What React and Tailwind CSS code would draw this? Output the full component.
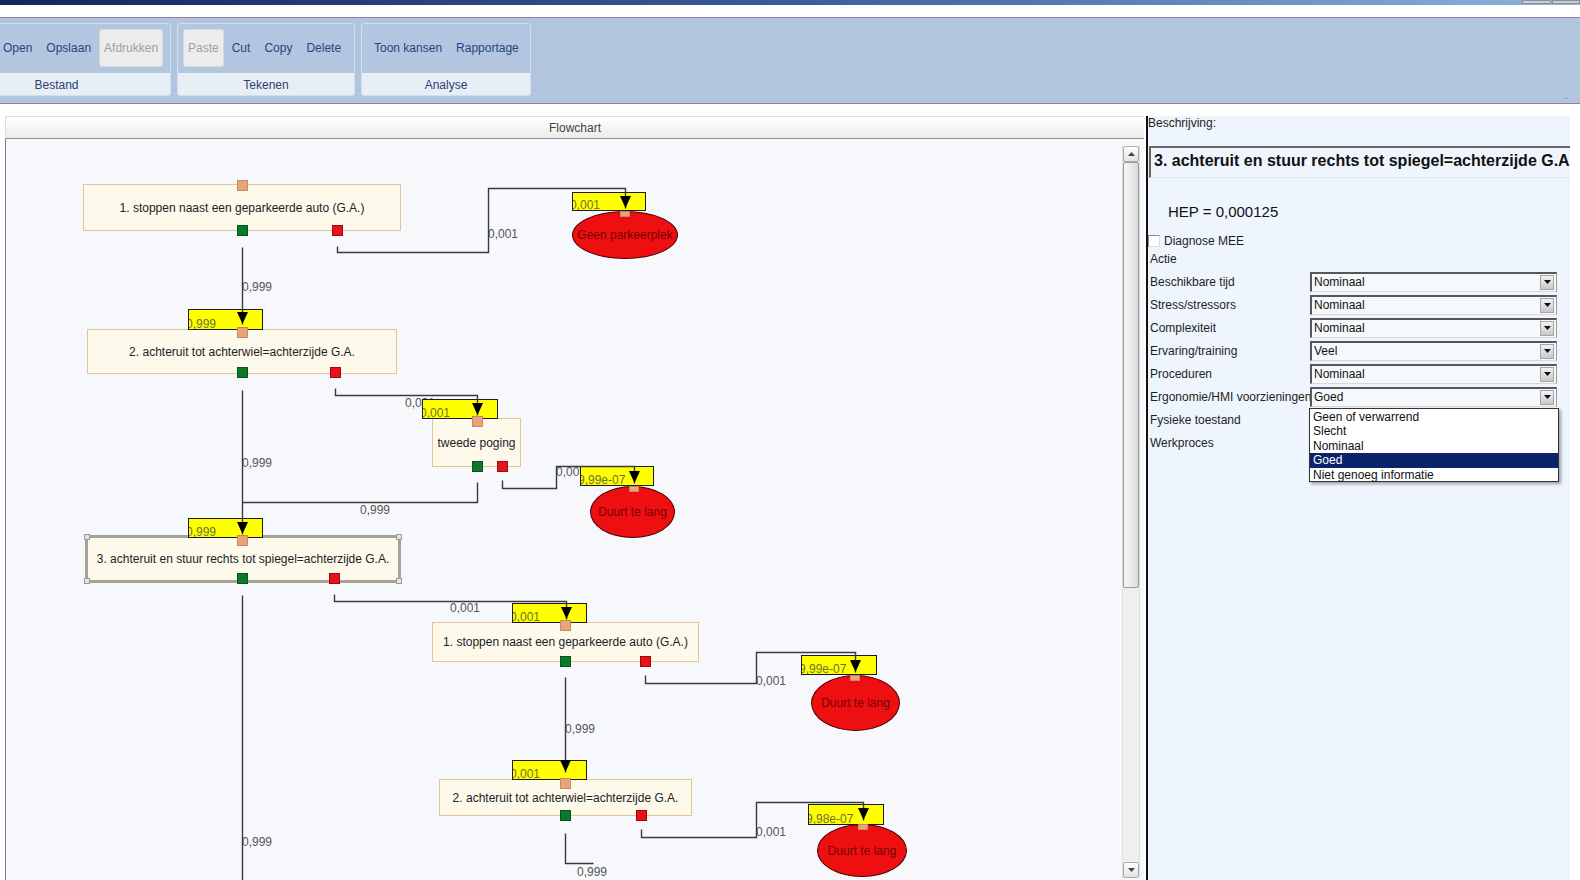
import React from "react";

const K = 1580 / 1568;
const KY = 880 / 873;
const OX = 6;
const OY = 139;
const X = (x) => Math.round(x * K) - OX;
const Y = (y) => Math.round(y * KY) - OY;

const nodes = [
  { x1: 82, y1: 183, x2: 398, y2: 229, text: "1. stoppen naast een geparkeerde auto (G.A.)" },
  { x1: 86, y1: 326, x2: 394, y2: 371, text: "2. achteruit tot achterwiel=achterzijde G.A." },
  { x1: 429, y1: 415, x2: 517, y2: 463, text: "tweede poging" },
  { x1: 84, y1: 531, x2: 398, y2: 578, text: "3. achteruit en stuur rechts tot spiegel=achterzijde G.A.", sel: true },
  { x1: 429, y1: 617, x2: 694, y2: 657, text: "1. stoppen naast een geparkeerde auto (G.A.)" },
  { x1: 436, y1: 773, x2: 687, y2: 810, text: "2. achteruit tot achterwiel=achterzijde G.A." },
];

const terminals = [
  { x1: 568, y1: 209, x2: 673, y2: 257, text: "Geen parkeerplek" },
  { x1: 586, y1: 482, x2: 670, y2: 534, text: "Duurt te lang" },
  { x1: 805, y1: 670, x2: 893, y2: 725, text: "Duurt te lang" },
  { x1: 811, y1: 817, x2: 900, y2: 870, text: "Duurt te lang" },
];

const ports = [
  [240, 184, "o"], [240, 228, "g"], [334, 228, "r"],
  [240, 329, "o"], [240, 369, "g"], [332, 369, "r"],
  [473, 418, "o"], [473, 462, "g"], [498, 462, "r"],
  [240, 536, "o"], [240, 573, "g"], [331, 573, "r"],
  [561, 620, "o"], [561, 656, "g"], [640, 656, "r"],
  [561, 777, "o"], [561, 809, "g"], [636, 809, "r"],
];

const tports = [[620, 212], [629, 485], [849, 673], [856, 820]];

const yboxes = [
  { x1: 568, y1: 190, x2: 641, y2: 209, t: "0,001" },
  { x1: 187, y1: 307, x2: 261, y2: 327, t: "0,999" },
  { x1: 419, y1: 396, x2: 494, y2: 416, t: "0,001" },
  { x1: 576, y1: 462, x2: 649, y2: 482, t: "9,99e-07" },
  { x1: 187, y1: 514, x2: 261, y2: 534, t: "0,999" },
  { x1: 508, y1: 598, x2: 583, y2: 618, t: "0,001" },
  { x1: 795, y1: 650, x2: 870, y2: 670, t: "9,99e-07" },
  { x1: 508, y1: 754, x2: 583, y2: 774, t: "0,001" },
  { x1: 802, y1: 798, x2: 877, y2: 818, t: "9,98e-07" },
];

const edges = [
  { pts: [[334, 244], [334, 250], [484, 250], [484, 187], [620, 187], [620, 206]], arrow: true },
  { pts: [[240, 245], [240, 321]], arrow: true },
  { pts: [[332, 385], [332, 392], [473, 392], [473, 412]], arrow: true },
  { pts: [[498, 476], [498, 484], [552, 484], [552, 462], [629, 462], [629, 479]], arrow: true },
  { pts: [[473, 478], [473, 498], [240, 498]] },
  { pts: [[240, 387], [240, 530]], arrow: true },
  { pts: [[331, 589], [331, 596], [562, 596], [562, 614]], arrow: true },
  { pts: [[640, 670], [640, 678], [750, 678], [750, 647], [849, 647], [849, 667]], arrow: true },
  { pts: [[561, 672], [561, 766]], arrow: true },
  { pts: [[636, 822], [636, 830], [750, 830], [750, 796], [856, 796], [856, 813]], arrow: true },
  { pts: [[561, 826], [561, 856], [588, 856]] },
  { pts: [[240, 590], [240, 900]] },
];

const labels = [
  { x: 484, y: 232, t: "0,001" },
  { x: 240, y: 285, t: "0,999" },
  { x: 402, y: 400, t: "0,001" },
  { x: 552, y: 468, t: "0,001" },
  { x: 357, y: 506, t: "0,999" },
  { x: 240, y: 459, t: "0,999" },
  { x: 447, y: 603, t: "0,001" },
  { x: 750, y: 676, t: "0,001" },
  { x: 561, y: 723, t: "0,999" },
  { x: 750, y: 825, t: "0,001" },
  { x: 573, y: 865, t: "0,999" },
  { x: 240, y: 835, t: "0,999" },
];

const portColor = {
  o: "bg-[#e9a57a] border-[#c98a62]",
  g: "bg-[#0b7a2b] border-[#08521d]",
  r: "bg-[#e8121a] border-[#a0080e]",
};

function Btn({ children, disabled }) {
  return disabled ? (
    <div className="h-[38px] px-[4px] flex items-center rounded-[3px] bg-[#ececec] border border-[#d9d9d9] text-[#a0a0a0]">
      {children}
    </div>
  ) : (
    <div className="h-[38px] px-[6px] flex items-center text-[#24467e]">{children}</div>
  );
}

function Group({ cls, pad, label, children }) {
  return (
    <div className={"shrink-0 h-[73px] flex flex-col rounded-[3px] border border-[#d3ddeb] bg-[#b3c6df] overflow-hidden " + cls}>
      <div className={"h-[49px] flex items-start pt-[5px] gap-[2px] " + pad}>{children}</div>
      <div className="flex-1 bg-[#e8eef6] flex items-center justify-center text-[#2a4470] pt-[1px]">{label}</div>
    </div>
  );
}

function Select({ value }) {
  return (
    <div className="w-[247px] h-[20px] relative bg-[#f6f9fc] border-t-2 border-l-2 border-[#585858] border-r border-b border-r-[#9a9a9a] border-b-[#d8d8d8] flex items-center pl-[2px] text-[#111]">
      {value}
      <div className="absolute right-[2px] top-[1px] w-[14px] h-[15px] bg-gradient-to-b from-[#f2f2f2] to-[#c9c9c9] border border-[#a5a5a5] flex items-center justify-center">
        <svg width="7" height="4" viewBox="0 0 7 4"><path d="M0 0H7L3.5 4Z" fill="#111" /></svg>
      </div>
    </div>
  );
}

function Flowchart() {
  return (
    <div className="relative flex-1 h-full overflow-hidden border-l border-[#7a7a7a] bg-[#f7f8fc]">
      {nodes.map((n, i) => (
        <div
          key={"n" + i}
          className={
            "absolute flex items-center justify-center text-[#222] whitespace-nowrap bg-[#fdfaec] " +
            (n.sel ? "border-[3px] border-[#a5a29a]" : "border border-[#e2c596]")
          }
          style={{ left: X(n.x1), top: Y(n.y1), width: X(n.x2) - X(n.x1), height: Y(n.y2) - Y(n.y1) }}
        >
          <span>{n.text}</span>
          {n.sel && (
            <>
              <div className="absolute -left-[4px] -top-[4px] w-[6px] h-[6px] bg-[#e4e4e4] border border-[#9a9a9a]" />
              <div className="absolute -right-[4px] -top-[4px] w-[6px] h-[6px] bg-[#e4e4e4] border border-[#9a9a9a]" />
              <div className="absolute -left-[4px] -bottom-[4px] w-[6px] h-[6px] bg-[#e4e4e4] border border-[#9a9a9a]" />
              <div className="absolute -right-[4px] -bottom-[4px] w-[6px] h-[6px] bg-[#e4e4e4] border border-[#9a9a9a]" />
            </>
          )}
        </div>
      ))}
      {terminals.map((t, i) => (
        <div
          key={"t" + i}
          className="absolute rounded-[50%] bg-[#ee1010] border border-[#4a0000] flex items-center justify-center text-[#7a0000] whitespace-nowrap"
          style={{ left: X(t.x1), top: Y(t.y1), width: X(t.x2) - X(t.x1), height: Y(t.y2) - Y(t.y1) }}
        >
          {t.text}
        </div>
      ))}
      {labels.map((l, i) => (
        <div
          key={"l" + i}
          className="absolute leading-[14px] text-[#555] whitespace-nowrap"
          style={{ left: X(l.x), top: Y(l.y) - 7 }}
        >
          {l.t}
        </div>
      ))}
      {yboxes.map((b, i) => (
        <div
          key={"y" + i}
          className="absolute bg-[#ffff00] border border-[#1c1c1c] overflow-hidden flex items-end"
          style={{ left: X(b.x1), top: Y(b.y1), width: X(b.x2) - X(b.x1), height: Y(b.y2) - Y(b.y1) }}
        >
          <span className="-ml-[3px] -mb-[2px] leading-[13px] text-[#6f6f3a]">{b.t}</span>
        </div>
      ))}
      <svg className="absolute left-0 top-0" width="1120" height="745">
        {edges.map((e, i) => {
          const pts = e.pts.map(([x, y]) => X(x) + 0.5 + "," + (Y(y) + 0.5)).join(" ");
          const last = e.pts[e.pts.length - 1];
          const tx = X(last[0]) + 0.5;
          const ty = Y(last[1]);
          return (
            <g key={"e" + i}>
              <polyline points={pts} fill="none" stroke="#3a3a3a" strokeWidth="1.4" />
              {e.arrow && <path d={`M${tx - 5.5} ${ty - 12}L${tx + 5.5} ${ty - 12}L${tx} ${ty}Z`} fill="#000" />}
            </g>
          );
        })}
      </svg>
      {ports.map(([cx, cy, c], i) => (
        <div
          key={"p" + i}
          className={"absolute w-[11px] h-[11px] border " + portColor[c]}
          style={{ left: X(cx) - 5, top: Y(cy) - 5 }}
        />
      ))}
      {tports.map(([cx, cy], i) => (
        <div
          key={"tp" + i}
          className="absolute w-[10px] h-[6px] bg-[#e9a57a] border border-[#c98a62]"
          style={{ left: X(cx) - 5, top: Y(cy) - 3 }}
        />
      ))}
    </div>
  );
}

export default function App() {
  const rows = [
    ["Beschikbare tijd", "Nominaal"],
    ["Stress/stressors", "Nominaal"],
    ["Complexiteit", "Nominaal"],
    ["Ervaring/training", "Veel"],
    ["Proceduren", "Nominaal"],
    ["Ergonomie/HMI voorzieningen", "Goed"],
    ["Fysieke toestand", "Nominaal"],
    ["Werkproces", "Nominaal"],
  ];
  return (
    <div className="w-[1580px] h-[880px] overflow-hidden bg-white flex flex-col font-['Liberation_Sans',Arial,sans-serif] text-[12px]">
      {/* window title bar */}
      <div className="h-[5px] shrink-0 bg-gradient-to-r from-[#14265c] via-[#3d5b9a] to-[#93b3dd] flex justify-end">
        <div className="w-[58px] h-[4px] flex gap-[1px]">
          <div className="flex-1 bg-[#c8ccd4] border border-[#8a8f99]" />
          <div className="flex-1 bg-[#c8ccd4] border border-[#8a8f99]" />
        </div>
      </div>
      <div className="h-[12px] shrink-0 bg-white" />
      {/* ribbon */}
      <div className="h-[87px] shrink-0 bg-[#b1c5df] border-y border-[#9a78a8] flex gap-[6px] pt-[5px] relative">
        <Group cls="w-[229px] -ml-[58px]" pad="pl-[54px]" label="Bestand">
          <Btn>Open</Btn>
          <Btn>Opslaan</Btn>
          <Btn disabled>Afdrukken</Btn>
        </Group>
        <Group cls="w-[178px]" pad="pl-[5px]" label="Tekenen">
          <Btn disabled>Paste</Btn>
          <Btn>Cut</Btn>
          <Btn>Copy</Btn>
          <Btn>Delete</Btn>
        </Group>
        <Group cls="w-[170px]" pad="pl-[6px]" label="Analyse">
          <Btn>Toon kansen</Btn>
          <Btn>Rapportage</Btn>
        </Group>
        <div className="absolute right-[10px] bottom-[2px] text-[8px] leading-[8px] text-[#8a9ab8]">⌄</div>
      </div>
      <div className="h-[12px] shrink-0 bg-white" />
      {/* main */}
      <div className="flex-1 flex min-h-0">
        <div className="ml-[5px] w-[1139px] flex flex-col">
          <div className="h-[23px] shrink-0 bg-gradient-to-b from-white to-[#ebebeb] border-t border-l border-[#dcdcdc] border-b border-b-[#8a8a8a] flex items-center justify-center text-[#444]">
            Flowchart
          </div>
          <div className="flex-1 flex min-h-0 bg-[#f7f8fc]">
            <Flowchart />
            <div className="w-[18px] mt-[7px] mb-[2px] mr-[4px] flex flex-col bg-[#efefef] border-x border-[#dedede]">
              <div className="h-[16px] shrink-0 bg-gradient-to-b from-white to-[#e2e2e2] border border-[#ababab] rounded-[2px] flex items-center justify-center">
                <svg width="7" height="4" viewBox="0 0 7 4"><path d="M0 4H7L3.5 0Z" fill="#444" /></svg>
              </div>
              <div className="h-[426px] shrink-0 rounded-[2px] border border-[#9c9c9c] bg-gradient-to-r from-[#f6f6f6] via-[#ececec] to-[#d8d8d8]" />
              <div className="flex-1" />
              <div className="h-[16px] shrink-0 bg-gradient-to-b from-white to-[#e2e2e2] border border-[#ababab] rounded-[2px] flex items-center justify-center">
                <svg width="7" height="4" viewBox="0 0 7 4"><path d="M0 0H7L3.5 4Z" fill="#444" /></svg>
              </div>
            </div>
          </div>
        </div>
        {/* right panel */}
        <div className="ml-[2px] border-l-2 border-[#111] w-[424px] flex flex-col">
          <div className="relative w-[422px] flex-1 bg-[#eef5fc] text-[#1e1e1e]">
            <div className="h-[14px] leading-[14px]">Beschrijving:</div>
            <div className="mt-[16px] ml-[1px] h-[32px] border-t-2 border-l-2 border-[#666] border-b border-b-[#dfe6ee] flex items-center pl-[3px] overflow-hidden whitespace-nowrap">
              <span className="text-[16px] font-bold text-[#111] -mt-[4px]">
                3. achteruit en stuur rechts tot spiegel=achterzijde G.A.
              </span>
            </div>
            <div className="mt-[22px] h-[24px] flex items-center pl-[20px] text-[15px] text-[#111]">HEP = 0,000125</div>
            <div className="mt-[9px] h-[16px] flex items-center">
              <div className="w-[12px] h-[12px] bg-white border-t border-l border-[#8a8a8a] border-r border-b border-r-[#dcdcdc] border-b-[#dcdcdc]" />
              <span className="ml-[4px]">Diagnose MEE</span>
            </div>
            <div className="mt-[2px] h-[16px] flex items-center pl-[2px]">Actie</div>
            <div className="mt-[3px] flex flex-col">
              {rows.map(([l, v]) => (
                <div key={l} className="h-[23px] flex items-center">
                  <div className="w-[162px] pl-[2px] whitespace-nowrap">{l}</div>
                  <Select value={v} />
                </div>
              ))}
            </div>
            <div className="absolute left-[161px] top-[292px] w-[250px] h-[74px] bg-white border border-[#333] shadow-[2px_2px_3px_rgba(0,0,0,0.35)] pt-[1px] text-[#111]">
              {["Geen of verwarrend", "Slecht", "Nominaal", "Goed", "Niet genoeg informatie"].map((t) => (
                <div
                  key={t}
                  className={"h-[14.4px] leading-[14.4px] pl-[3px] " + (t === "Goed" ? "bg-[#0a246a] text-white" : "")}
                >
                  {t}
                </div>
              ))}
            </div>
          </div>
        </div>
      </div>
    </div>
  );
}
